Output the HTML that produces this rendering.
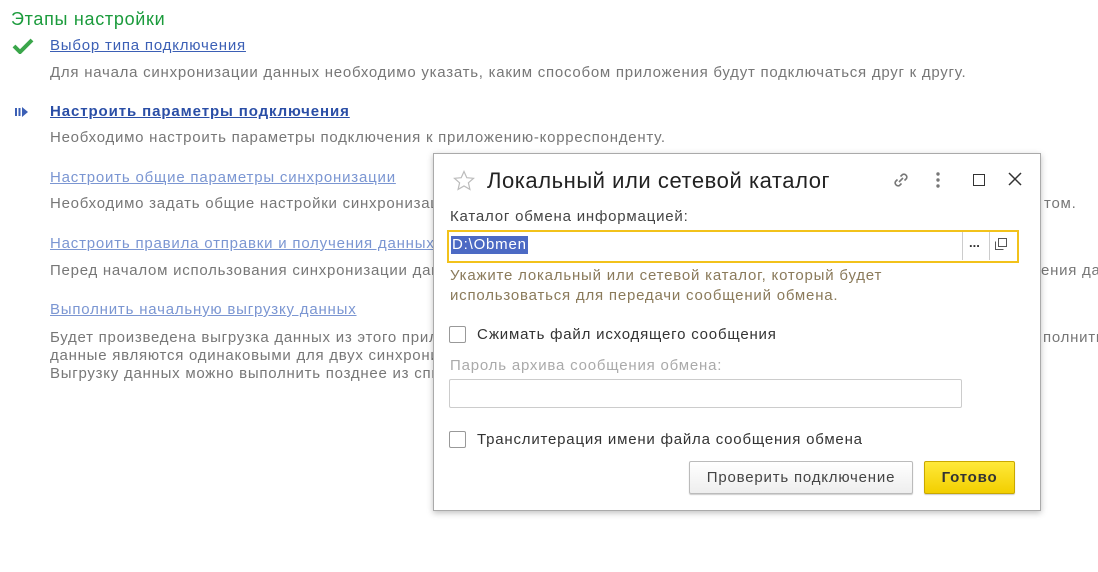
<html><head><style>
body{margin:0;width:1098px;height:572px;background:#fff;font-family:"Liberation Sans",sans-serif;position:relative;overflow:hidden;letter-spacing:0.8px}
.a{position:absolute;white-space:nowrap}
.h{left:11px;top:9px;font-size:18px;color:#1b9b3c;letter-spacing:0.7px}
.l{left:50px;font-size:15px;color:#3b5fb5;text-decoration:underline}
.lg{color:#7b96d2}
.d{left:50px;font-size:15px;color:#777;letter-spacing:0.75px}
.c{width:383px;overflow:hidden}
.t{font-size:15px;color:#777;letter-spacing:0.75px;overflow:hidden}
.dlg{position:absolute;left:433px;top:153px;width:606px;height:356px;border:1px solid #aaa;background:#fff;box-shadow:0 2px 6px rgba(0,0,0,.25)}
.dlg .a{font-size:15px}
</style></head><body>
<div class="a h">Этапы настройки</div>
<svg class="a" style="left:12px;top:38px" width="22" height="16"><path d="M2 8l6 6L20 2" stroke="#3aa64a" stroke-width="4" fill="none"/></svg>
<div class="a l" style="top:37px">Выбор типа подключения</div>
<div class="a d" style="top:64px">Для начала синхронизации данных необходимо указать, каким способом приложения будут подключаться друг к другу.</div>
<svg class="a" style="left:15px;top:106px" width="16" height="12"><rect x="0" y="2" width="2" height="8" fill="#3b5fb5"/><rect x="3.5" y="2" width="2" height="8" fill="#3b5fb5"/><path d="M7 1l6 5-6 5z" fill="#3b5fb5"/></svg>
<div class="a l" style="top:103px;font-weight:bold;color:#2a4ea6;letter-spacing:0.9px">Настроить параметры подключения</div>
<div class="a d" style="top:129px">Необходимо настроить параметры подключения к приложению-корреспонденту.</div>
<div class="a l lg" style="top:169px">Настроить общие параметры синхронизации</div>
<div class="a d c" style="top:195px">Необходимо задать общие настройки синхронизации данных</div>
<div class="a t" style="left:1044px;top:195px">том.</div>
<div class="a l lg c" style="top:235px">Настроить правила отправки и получения данных</div>
<div class="a d c" style="top:262px">Перед началом использования синхронизации данных</div>
<div class="a t" style="left:1041px;top:262px;width:57px">ения данных</div>
<div class="a l lg" style="top:301px">Выполнить начальную выгрузку данных</div>
<div class="a d c" style="top:329px;line-height:18px">Будет произведена выгрузка данных из этого приложения<br>данные являются одинаковыми для двух синхронизируемых<br>Выгрузку данных можно выполнить позднее из списка</div>
<div class="a t" style="left:1043px;top:329px;width:55px;line-height:18px">полнить</div>
<div class="dlg">
<svg class="a" style="left:19px;top:16px" width="22" height="22"><path d="M11 1.5l2.8 6.2 6.7.6-5.1 4.5 1.5 6.6L11 16l-5.9 3.4 1.5-6.6L1.5 8.3l6.7-.6z" fill="none" stroke="#bbb" stroke-width="1.2"/></svg>
<div class="a" style="left:53px;top:14px;font-size:22px!important;color:#222;letter-spacing:0.55px">Локальный или сетевой каталог</div>
<svg class="a" style="left:456px;top:15px" width="22" height="22"><g fill="none" stroke="#777" stroke-width="1.6"><path d="M9 13l4-4"/><path d="M7.5 10.5l-2 2a3 3 0 004 4l2-2"/><path d="M14.5 11.5l2-2a3 3 0 00-4-4l-2 2"/></g></svg>
<svg class="a" style="left:500px;top:17px" width="8" height="18"><circle cx="4" cy="3" r="1.7" fill="#777"/><circle cx="4" cy="9" r="1.7" fill="#777"/><circle cx="4" cy="15" r="1.7" fill="#777"/></svg>
<div class="a" style="left:539px;top:20px;width:10px;height:10px;border:1.5px solid #333"></div>
<svg class="a" style="left:574px;top:18px" width="14" height="14"><path d="M1 1l12 12M13 1L1 13" stroke="#333" stroke-width="1.5"/></svg>
<div class="a" style="left:16px;top:54px;color:#444">Каталог обмена информацией:</div>
<div class="a" style="left:13px;top:76px;width:568px;height:29px;border:2px solid #f2c21b"></div>
<div class="a" style="left:17px;top:82px;background:#4c6ac4;color:#fff;padding:0 1px;line-height:18px">D:\Obmen</div>
<div class="a" style="left:528px;top:78px;width:1px;height:28px;background:#ccc"></div>
<div class="a" style="left:535px;top:81px;color:#333;font-weight:bold;font-size:13px;letter-spacing:0">...</div>
<div class="a" style="left:555px;top:78px;width:1px;height:28px;background:#ccc"></div>
<svg class="a" style="left:561px;top:84px" width="12" height="12"><rect x="3.5" y="0.5" width="8" height="8" fill="none" stroke="#555"/><path d="M0.5 3.5v8h8" fill="none" stroke="#555"/></svg>
<div class="a" style="left:16px;top:112px;color:#8a7a5a;line-height:20px">Укажите локальный или сетевой каталог, который будет<br>использоваться для передачи сообщений обмена.</div>
<div class="a" style="left:15px;top:172px;width:15px;height:15px;border:1px solid #999;border-radius:2px"></div>
<div class="a" style="left:43px;top:172px;color:#333">Сжимать файл исходящего сообщения</div>
<div class="a" style="left:16px;top:203px;color:#aaa">Пароль архива сообщения обмена:</div>
<div class="a" style="left:15px;top:225px;width:511px;height:27px;border:1px solid #ccc;border-radius:2px"></div>
<div class="a" style="left:15px;top:277px;width:15px;height:15px;border:1px solid #999;border-radius:2px"></div>
<div class="a" style="left:43px;top:277px;color:#333">Транслитерация имени файла сообщения обмена</div>
<div class="a" style="left:255px;top:307px;width:222px;height:31px;border:1px solid #bbb;border-radius:2px;background:linear-gradient(#fff,#eee);box-shadow:0 1px 1px rgba(0,0,0,.2);text-align:center;line-height:31px;color:#444">Проверить подключение</div>
<div class="a" style="left:490px;top:307px;width:89px;height:31px;border:1px solid #c9a800;border-radius:2px;background:linear-gradient(#ffe93a,#f2cf00);box-shadow:0 1px 1px rgba(0,0,0,.2);text-align:center;line-height:31px;color:#333;font-weight:bold">Готово</div>
</div>
</body></html>
